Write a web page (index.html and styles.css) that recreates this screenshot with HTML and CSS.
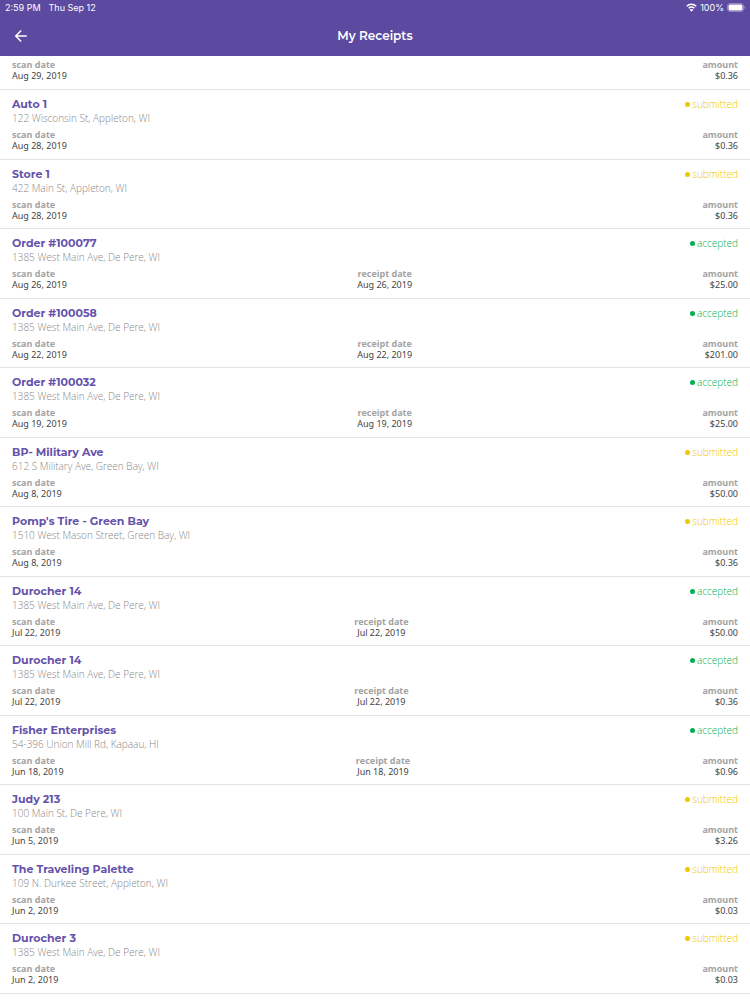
FILE: index.html
```html
<!DOCTYPE html>
<html lang="en">
<head>
  <meta charset="UTF-8">
  <meta name="viewport" content="width=device-width, initial-scale=1.0">
  <title>My Receipts</title>
  <link rel="stylesheet" href="styles.css">
</head>
<body>
  <header class="header">
    <div class="status-bar">
      <span>2:59 PM</span>
      <span>Thu Sep 12</span>
      <span class="device">
        <svg width="11" height="9" viewBox="0 0 22 18" fill="none" stroke="white" stroke-width="3">
          <path d="M1.5 6.5a13.5 13.5 0 0 1 19 0M5.3 10.6a8 8 0 0 1 11.4 0"/>
          <path d="M11 17.5l-3.7-3.9a5.3 5.3 0 0 1 7.4 0z" fill="white" stroke="none"/>
        </svg>
        <span>100%</span>
        <svg width="19" height="9" viewBox="0 0 38 18">
          <rect x="1" y="1" width="32" height="16" rx="5" fill="none" stroke="#a79cd0" stroke-width="1.5"/>
          <rect x="3" y="3" width="28" height="12" rx="3" fill="white"/>
          <path d="M35 6c2 1 2 5 0 6z" fill="#a79cd0"/>
        </svg>
      </span>
    </div>
    <div class="nav-bar">
      <button class="back" aria-label="Back">
        <svg width="14" height="14" viewBox="0 0 14 14" fill="none" stroke="white" stroke-width="1.4">
          <path d="M12.8 7H2M7.2 1.5L1.7 7l5.5 5.5"/>
        </svg>
      </button>
      <h1>My Receipts</h1>
    </div>
  </header>
  <main id="receipts"></main>

  <script src="script.js"></script>
</body>
</html>
```
FILE: styles.css
```css
body {
  font-family: 'Open Sans', sans-serif;
  background: white;
  color: #444;
  margin: 0;
}
.header {
  background: #5b4aa0;
  color: white;
}
.status-bar {
  display: flex;
  align-items: center;
  gap: 8px;
  height: 15px;
  padding: 0 4px 0 5px;
  font: 9px/15px Inter, sans-serif;
}
.device {
  display: flex;
  align-items: center;
  gap: 3px;
  margin-left: auto;
}
.nav-bar {
  display: grid;
  grid-template-columns: 1fr auto 1fr;
  align-items: center;
  height: 41px;
  padding: 0 12px;
}
.back {
  display: flex;
  justify-self: start;
  background: none;
  border: none;
  padding: 2px;
  cursor: pointer;
}
h1 {
  font: 600 12px/17px Montserrat, Inter, sans-serif;
  margin: 0;
}
.receipt {
  border-bottom: 1px solid #e4e4e6;
  padding: 7px 12px;
}
.receipt:nth-child(even) {
  padding-bottom: 8px;
}
.receipt.partial {
  padding: 3px 12px 8px;
}
.top {
  display: flex;
  justify-content: space-between;
  line-height: 14px;
}
h2 {
  color: #6552ab;
  font: 700 11px/14px Montserrat, Inter, sans-serif;
  margin: 0;
}
.status {
  display: flex;
  align-items: center;
  gap: 2px;
  font-size: 10px;
  font-weight: 300;
}
.status::before {
  content: "";
  width: 5px;
  height: 5px;
  border-radius: 50%;
  background: currentColor;
}
.submitted {
  color: #efc900;
}
.accepted {
  color: #00b050;
}
.address {
  color: #888;
  font-size: 10px;
  font-weight: 300;
  line-height: 14px;
  margin: 0 0 4px;
}
.details {
  display: flex;
  justify-content: space-between;
  font-size: 9px;
  line-height: 11px;
  margin: 0;
}
.details div {
  text-align: center;
}
.details div:first-child {
  text-align: left;
}
.details div:last-child {
  text-align: right;
}
dt {
  color: #a3a3a3;
  font-weight: 700;
}
dd {
  font-family: 'Noto Sans', sans-serif;
  margin: 0;
}
```
FILE: script.js
```js
const receipts = [
  { scan: "Aug 29, 2019", amount: "$0.36" },
  { name: "Auto 1", address: "122 Wisconsin St, Appleton, WI", status: "submitted", scan: "Aug 28, 2019", amount: "$0.36" },
  { name: "Store 1", address: "422 Main St, Appleton, WI", status: "submitted", scan: "Aug 28, 2019", amount: "$0.36" },
  { name: "Order #100077", address: "1385 West Main Ave, De Pere, WI", status: "accepted", scan: "Aug 26, 2019", receipt: "Aug 26, 2019", amount: "$25.00" },
  { name: "Order #100058", address: "1385 West Main Ave, De Pere, WI", status: "accepted", scan: "Aug 22, 2019", receipt: "Aug 22, 2019", amount: "$201.00" },
  { name: "Order #100032", address: "1385 West Main Ave, De Pere, WI", status: "accepted", scan: "Aug 19, 2019", receipt: "Aug 19, 2019", amount: "$25.00" },
  { name: "BP- Military Ave", address: "612 S Military Ave, Green Bay, WI", status: "submitted", scan: "Aug 8, 2019", amount: "$50.00" },
  { name: "Pomp's Tire - Green Bay", address: "1510 West Mason Street, Green Bay, WI", status: "submitted", scan: "Aug 8, 2019", amount: "$0.36" },
  { name: "Durocher 14", address: "1385 West Main Ave, De Pere, WI", status: "accepted", scan: "Jul 22, 2019", receipt: "Jul 22, 2019", amount: "$50.00" },
  { name: "Durocher 14", address: "1385 West Main Ave, De Pere, WI", status: "accepted", scan: "Jul 22, 2019", receipt: "Jul 22, 2019", amount: "$0.36" },
  { name: "Fisher Enterprises", address: "54-396 Union Mill Rd, Kapaau, HI", status: "accepted", scan: "Jun 18, 2019", receipt: "Jun 18, 2019", amount: "$0.96" },
  { name: "Judy 213", address: "100 Main St, De Pere, WI", status: "submitted", scan: "Jun 5, 2019", amount: "$3.26" },
  { name: "The Traveling Palette", address: "109 N. Durkee Street, Appleton, WI", status: "submitted", scan: "Jun 2, 2019", amount: "$0.03" },
  { name: "Durocher 3", address: "1385 West Main Ave, De Pere, WI", status: "submitted", scan: "Jun 2, 2019", amount: "$0.03" }
];

function field(label, value) {
  return value ? `<div><dt>${label}</dt><dd>${value}</dd></div>` : "";
}

document.getElementById("receipts").innerHTML = receipts.map(r => `
  <article class="receipt ${r.name ? "" : "partial"}">
    ${r.name ? `<div class="top"><h2>${r.name}</h2><span class="status ${r.status}">${r.status}</span></div>
    <p class="address">${r.address}</p>` : ""}
    <dl class="details">
      ${field("scan date", r.scan)}
      ${field("receipt date", r.receipt)}
      ${field("amount", r.amount)}
    </dl>
  </article>`).join("");
```
